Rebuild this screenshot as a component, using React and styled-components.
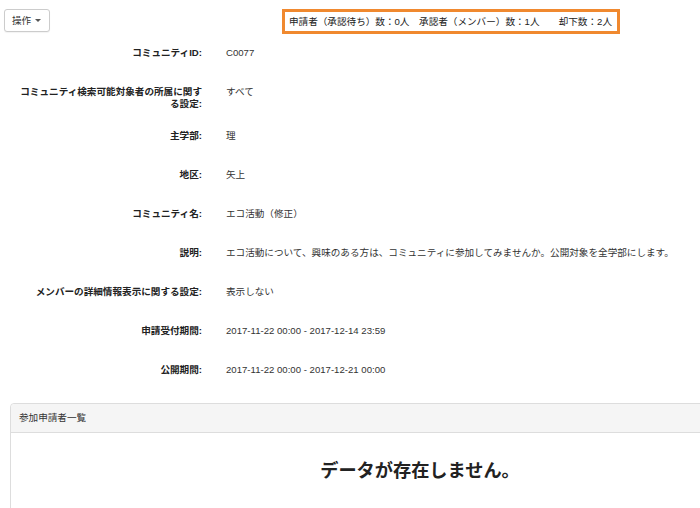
import styled, { createGlobalStyle } from "styled-components";

const GlobalStyle = createGlobalStyle`
  html, body {
    margin: 0;
    padding: 0;
    background: #fff;
  }
  body {
    font-family: "Liberation Sans", "Noto Sans CJK JP", sans-serif;
    font-size: 9.6px;
    line-height: 12px;
    color: #333;
  }
`;

const Page = styled.div`
  width: 700px;
  height: 508px;
  overflow: hidden;
  padding-top: 9px;
  box-sizing: border-box;
`;

const Header = styled.div`
  display: flex;
  align-items: flex-start;
  padding: 0 80px 0 4px;
  margin-bottom: 13px;
`;

const DropButton = styled.button`
  display: flex;
  align-items: center;
  gap: 4px;
  height: 23px;
  padding: 0 8px 0 7px;
  margin-right: auto;
  font: inherit;
  color: #333;
  background: #fff;
  border: 1px solid #ccc;
  border-radius: 3px;
  box-shadow: 0 1px 1px rgba(0, 0, 0, 0.05);
`;

const Caret = styled.span`
  width: 0;
  height: 0;
  border-left: 3px solid transparent;
  border-right: 3px solid transparent;
  border-top: 3px solid #555;
`;

const Stats = styled.div`
  display: flex;
  align-items: center;
  height: 19px;
  padding: 0 5px 0 4px;
  border: 3px solid #f0892f;
  color: #222;
  white-space: pre;
`;

const Details = styled.div`
  display: flex;
  flex-direction: column;
`;

const Row = styled.div`
  display: grid;
  grid-template-columns: 186px 1fr;
  column-gap: 24px;
  padding-left: 16px;
`;

const Label = styled.div`
  text-align: right;
  font-weight: bold;
  color: #222;
  padding-bottom: 20px;
`;

const Value = styled.div`
  min-height: 39px;
  color: #333;
`;

const Panel = styled.div`
  margin-left: 10px;
  width: 818px;
  border: 1px solid #ddd;
  border-radius: 4px;
  background: #fff;
`;

const PanelHeading = styled.div`
  height: 28px;
  display: flex;
  align-items: center;
  padding-left: 8px;
  background: #f5f5f5;
  border-bottom: 1px solid #ddd;
  border-radius: 4px 4px 0 0;
  color: #333;
`;

const Empty = styled.div`
  padding: 27px 0 40px;
  text-align: center;
  font-size: 18.2px;
  line-height: 22px;
  font-weight: bold;
  color: #222;
`;

const rows = [
  ["コミュニティID:", "C0077"],
  ["コミュニティ検索可能対象者の所属に関する設定:", "すべて"],
  ["主学部:", "理"],
  ["地区:", "矢上"],
  ["コミュニティ名:", "エコ活動（修正）"],
  [
    "説明:",
    "エコ活動について、興味のある方は、コミュニティに参加してみませんか。公開対象を全学部にします。",
  ],
  ["メンバーの詳細情報表示に関する設定:", "表示しない"],
  ["申請受付期間:", "2017-11-22 00:00 - 2017-12-14 23:59"],
  ["公開期間:", "2017-11-22 00:00 - 2017-12-21 00:00"],
];

export default function App() {
  return (
    <Page>
      <GlobalStyle />
      <Header>
        <DropButton type="button">
          操作
          <Caret />
        </DropButton>
        <Stats>
          {"申請者（承認待ち）数：0人　承認者（メンバー）数：1人　　却下数：2人"}
        </Stats>
      </Header>
      <Details>
        {rows.map(([label, value]) => (
          <Row key={label}>
            <Label>{label}</Label>
            <Value>{value}</Value>
          </Row>
        ))}
      </Details>
      <Panel>
        <PanelHeading>参加申請者一覧</PanelHeading>
        <Empty>データが存在しません。</Empty>
      </Panel>
    </Page>
  );
}
